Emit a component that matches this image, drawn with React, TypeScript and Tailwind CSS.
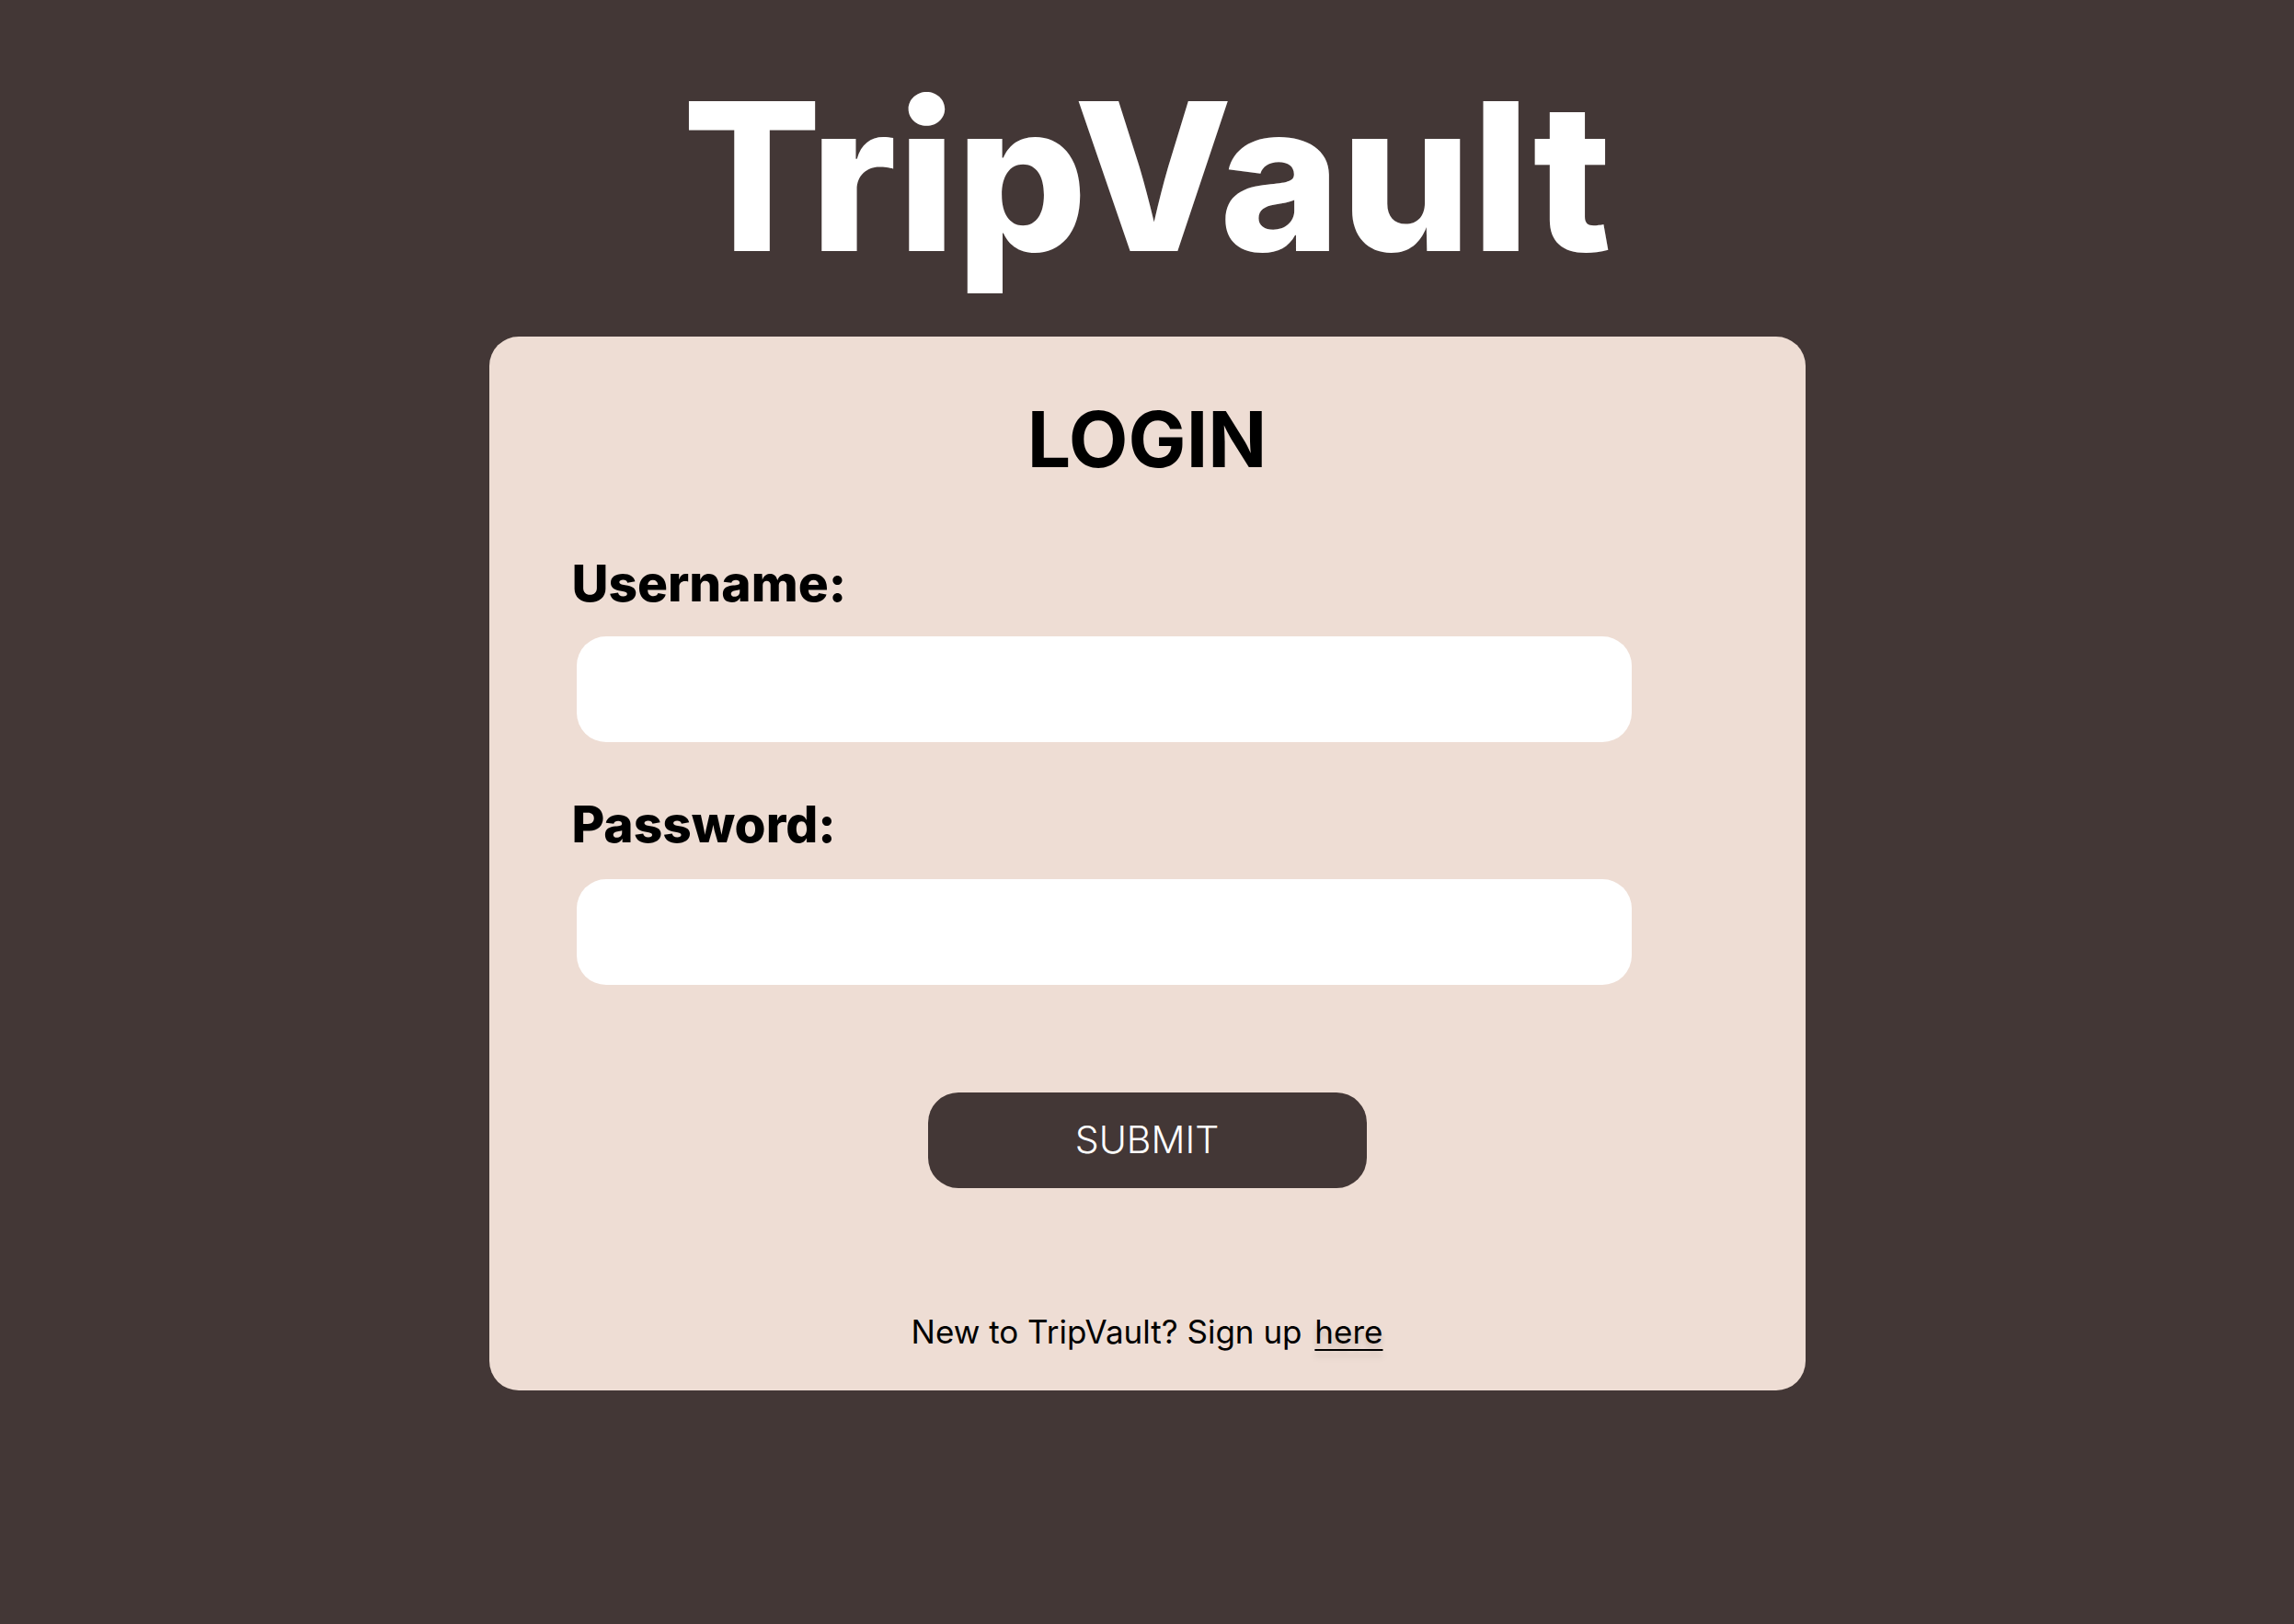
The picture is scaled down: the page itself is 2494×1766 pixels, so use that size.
import React from 'react';

export default function App() {
  return <div className="min-h-screen w-full bg-[#433736] flex flex-col items-center font-['Inter',sans-serif]">
      <h1 className="mt-[80px] text-[224px] leading-none font-extrabold text-white">
        TripVault
      </h1>

      <form onSubmit={e => e.preventDefault()} className="mt-[62px] w-[1431px] bg-[#eeddd4] rounded-[32px] pt-[70px] pb-[46px] flex flex-col">
        <h2 className="text-center text-[84px] leading-none font-bold text-black">
          LOGIN
        </h2>

        <div className="mt-[87px] pl-[90px] flex flex-col items-start">
          <label className="text-[55px] leading-none font-extrabold text-black">
            Username:
          </label>
          <input type="text" className="mt-[30px] ml-[5px] w-[1147px] h-[115px] bg-white rounded-[32px] outline-none px-8 text-[40px]" />

          <label className="mt-[62px] text-[55px] leading-none font-extrabold text-black">
            Password:
          </label>
          <input type="password" className="mt-[32px] ml-[5px] w-[1147px] h-[115px] bg-white rounded-[32px] outline-none px-8 text-[40px]" />
        </div>

        <button type="submit" className="mt-[117px] self-center w-[477px] h-[104px] bg-[#433736] rounded-[33px] text-white text-[41px] font-light">
          SUBMIT
        </button>

        <p className="mt-[139px] text-center text-[35px] leading-none text-black">
          New to TripVault? Sign up{' '}
          <a href="#" className="ml-1 underline underline-offset-[6px] decoration-2 [text-shadow:0_6px_6px_rgba(0,0,0,0.15)]">here</a>
        </p>
      </form>
    </div>;
}
